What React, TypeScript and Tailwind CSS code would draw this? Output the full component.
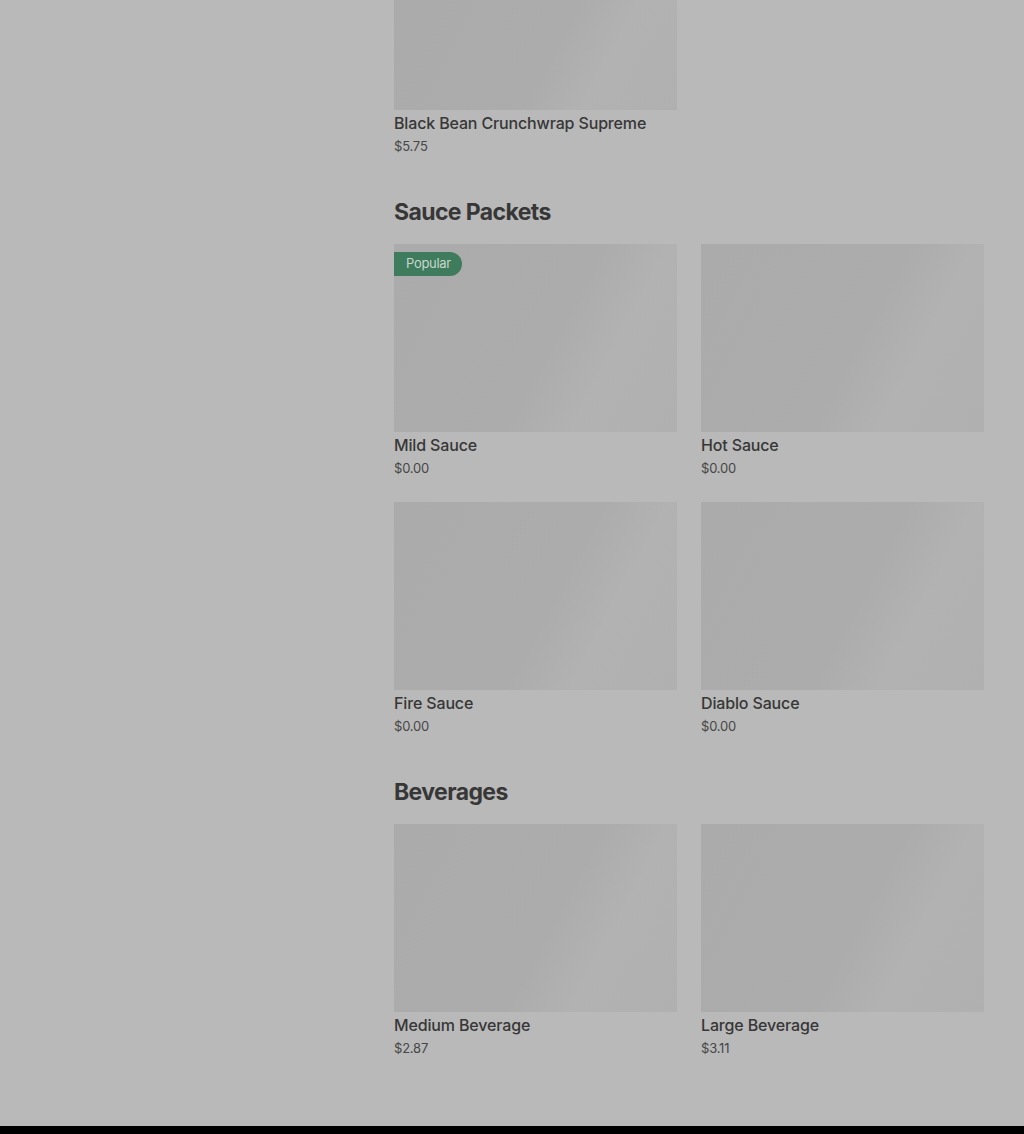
import React from "react";

type Item = { name: string; price: string; popular?: boolean };

const Card = ({ item }: { item: Item }) => (
  <div className="flex flex-col">
    <div className="relative h-[188px] w-full bg-[linear-gradient(118deg,#ababab_0%,#acacac_55%,#b2b2b2_72%,#b0b0b0_100%)]">
      {item.popular && (
        <span className="absolute left-0 top-[8px] flex h-[24px] items-center rounded-r-full bg-[#3f7b5d] pl-[12px] pr-[11px] text-[13px] tracking-[-0.3px] text-[#c6d7cc]">
          Popular
        </span>
      )}
    </div>
    <div className="mt-[3px] text-[16px] font-medium leading-[20px] tracking-[-0.15px] text-[#373737]">{item.name}</div>
    <div className="mt-[3px] text-[13px] leading-[20px] tracking-[-0.2px] text-[#474747]">{item.price}</div>
  </div>
);

const Section = ({ title, items }: { title: string; items: Item[] }) => (
  <section className="mt-[40px]">
    <h2 className="mb-[16px] text-[23px] font-bold leading-[32px] tracking-[-0.6px] text-[#373737]">{title}</h2>
    <div className="grid grid-cols-2 gap-x-[24px] gap-y-[24px]">
      {items.map((it) => (
        <Card key={it.name} item={it} />
      ))}
    </div>
  </section>
);

export default function App() {
  return (
    <div className="flex min-h-[1134px] flex-col bg-[#b9b9b9] font-['Inter',sans-serif]">
      <div className="flex flex-1">
        <div className="w-[394px] shrink-0" />
        <div className="w-[590px] pb-[68px]">
          <div className="grid grid-cols-2 gap-x-[24px]">
            <div className="flex flex-col">
              <div className="h-[110px] w-full bg-[linear-gradient(118deg,#ababab_0%,#acacac_55%,#b2b2b2_72%,#b0b0b0_100%)]" />
              <div className="mt-[3px] text-[16px] font-medium leading-[20px] tracking-[-0.15px] text-[#373737]">Black Bean Crunchwrap Supreme</div>
              <div className="mt-[3px] text-[13px] leading-[20px] tracking-[-0.2px] text-[#474747]">$5.75</div>
            </div>
          </div>
          <Section
            title="Sauce Packets"
            items={[
              { name: "Mild Sauce", price: "$0.00", popular: true },
              { name: "Hot Sauce", price: "$0.00" },
              { name: "Fire Sauce", price: "$0.00" },
              { name: "Diablo Sauce", price: "$0.00" },
            ]}
          />
          <Section
            title="Beverages"
            items={[
              { name: "Medium Beverage", price: "$2.87" },
              { name: "Large Beverage", price: "$3.11" },
            ]}
          />
        </div>
      </div>
      <div className="h-[8px] bg-black" />
    </div>
  );
}
